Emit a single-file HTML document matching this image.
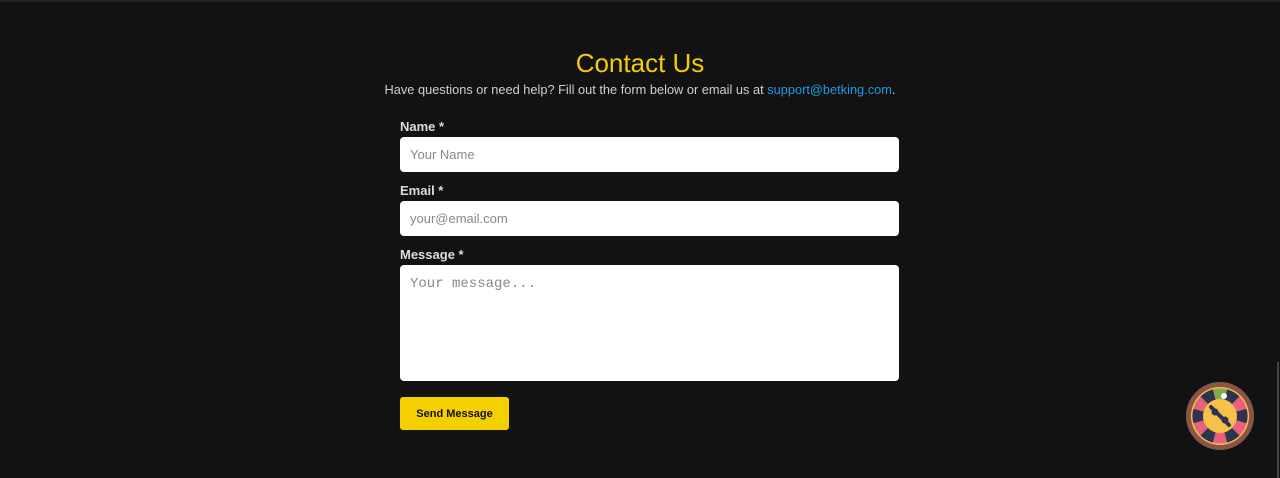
<!DOCTYPE html>
<html><head><style>
body{margin:0;width:1280px;height:478px;background:#121212;overflow:hidden;font-family:"Liberation Sans",sans-serif;position:relative}
.top{position:absolute;top:0;left:0;width:1280px;height:2px;background:#222}
h1{position:absolute;top:48px;left:0;width:1280px;text-align:center;margin:0;font-weight:400;font-size:26px;color:#f5cc00}
.sub{position:absolute;top:82px;left:0;width:1280px;text-align:center;font-size:12.8px;color:#cfcfcf}
.sub a{color:#1e9be6;text-decoration:none}
label{position:absolute;left:400px;font-size:13px;font-weight:bold;color:#ddd}
.in{position:absolute;left:400px;width:499px;background:#fff;border-radius:4px;font-family:"Liberation Sans",sans-serif;font-size:13px;color:#888;box-sizing:border-box;padding-left:10px}
.btn{position:absolute;left:400px;top:397px;width:109px;height:33px;background:#f5d000;border-radius:3px;font-size:11px;font-weight:bold;color:#111;text-align:center;line-height:35px}
.sb{position:absolute;right:1px;top:362px;width:2px;height:116px;background:#444}
</style></head><body>
<div class="top"></div>
<h1>Contact Us</h1>
<div class="sub">Have questions or need help? Fill out the form below or email us at <a>support@betking.com</a>.</div>
<label style="top:119px">Name *</label>
<div class="in" style="top:137px;height:35px;line-height:36px">Your Name</div>
<label style="top:183px">Email *</label>
<div class="in" style="top:201px;height:35px;line-height:36px">your@email.com</div>
<label style="top:247px">Message *</label>
<div class="in" style="top:265px;height:116px;padding-top:11px;font-family:'Liberation Mono',monospace;font-size:14px">Your message...</div>
<div class="btn">Send Message</div>
<div class="sb"></div>
<svg style="position:absolute;left:1186px;top:382px" width="68" height="68" viewBox="-34 -34 68 68">
<circle r="34" fill="#8a5548"/>
<circle r="29" fill="#f7c04a"/>
<circle r="27.5" fill="#e8607a"/>
<g fill="#2e3350">
<path id="s" d="M0 0 L-7.1 -26.6 A27.5 27.5 0 0 1 7.1 -26.6Z" transform="rotate(30)"/>
<path d="M0 0 L-7.1 -26.6 A27.5 27.5 0 0 1 7.1 -26.6Z" transform="rotate(90)"/>
<path d="M0 0 L-7.1 -26.6 A27.5 27.5 0 0 1 7.1 -26.6Z" transform="rotate(150)"/>
<path d="M0 0 L-7.1 -26.6 A27.5 27.5 0 0 1 7.1 -26.6Z" transform="rotate(210)"/>
<path d="M0 0 L-7.1 -26.6 A27.5 27.5 0 0 1 7.1 -26.6Z" transform="rotate(270)"/>
<path d="M0 0 L-7.1 -26.6 A27.5 27.5 0 0 1 7.1 -26.6Z" transform="rotate(330)"/>
</g>
<path d="M0 0 L-7.1 -26.6 A27.5 27.5 0 0 1 7.1 -26.6Z" fill="#7fae4a"/>
<circle r="17" fill="#f7c04a"/>
<g stroke="#2e3350" stroke-width="4" stroke-linecap="round"><line x1="-9" y1="-9" x2="9" y2="9"/></g>
<circle cx="-5" cy="-4" r="3.5" fill="#2e3350"/><circle cx="5" cy="4" r="3.5" fill="#2e3350"/>
<circle cx="4" cy="-20" r="3" fill="#fff"/>
</svg>
</body></html>
